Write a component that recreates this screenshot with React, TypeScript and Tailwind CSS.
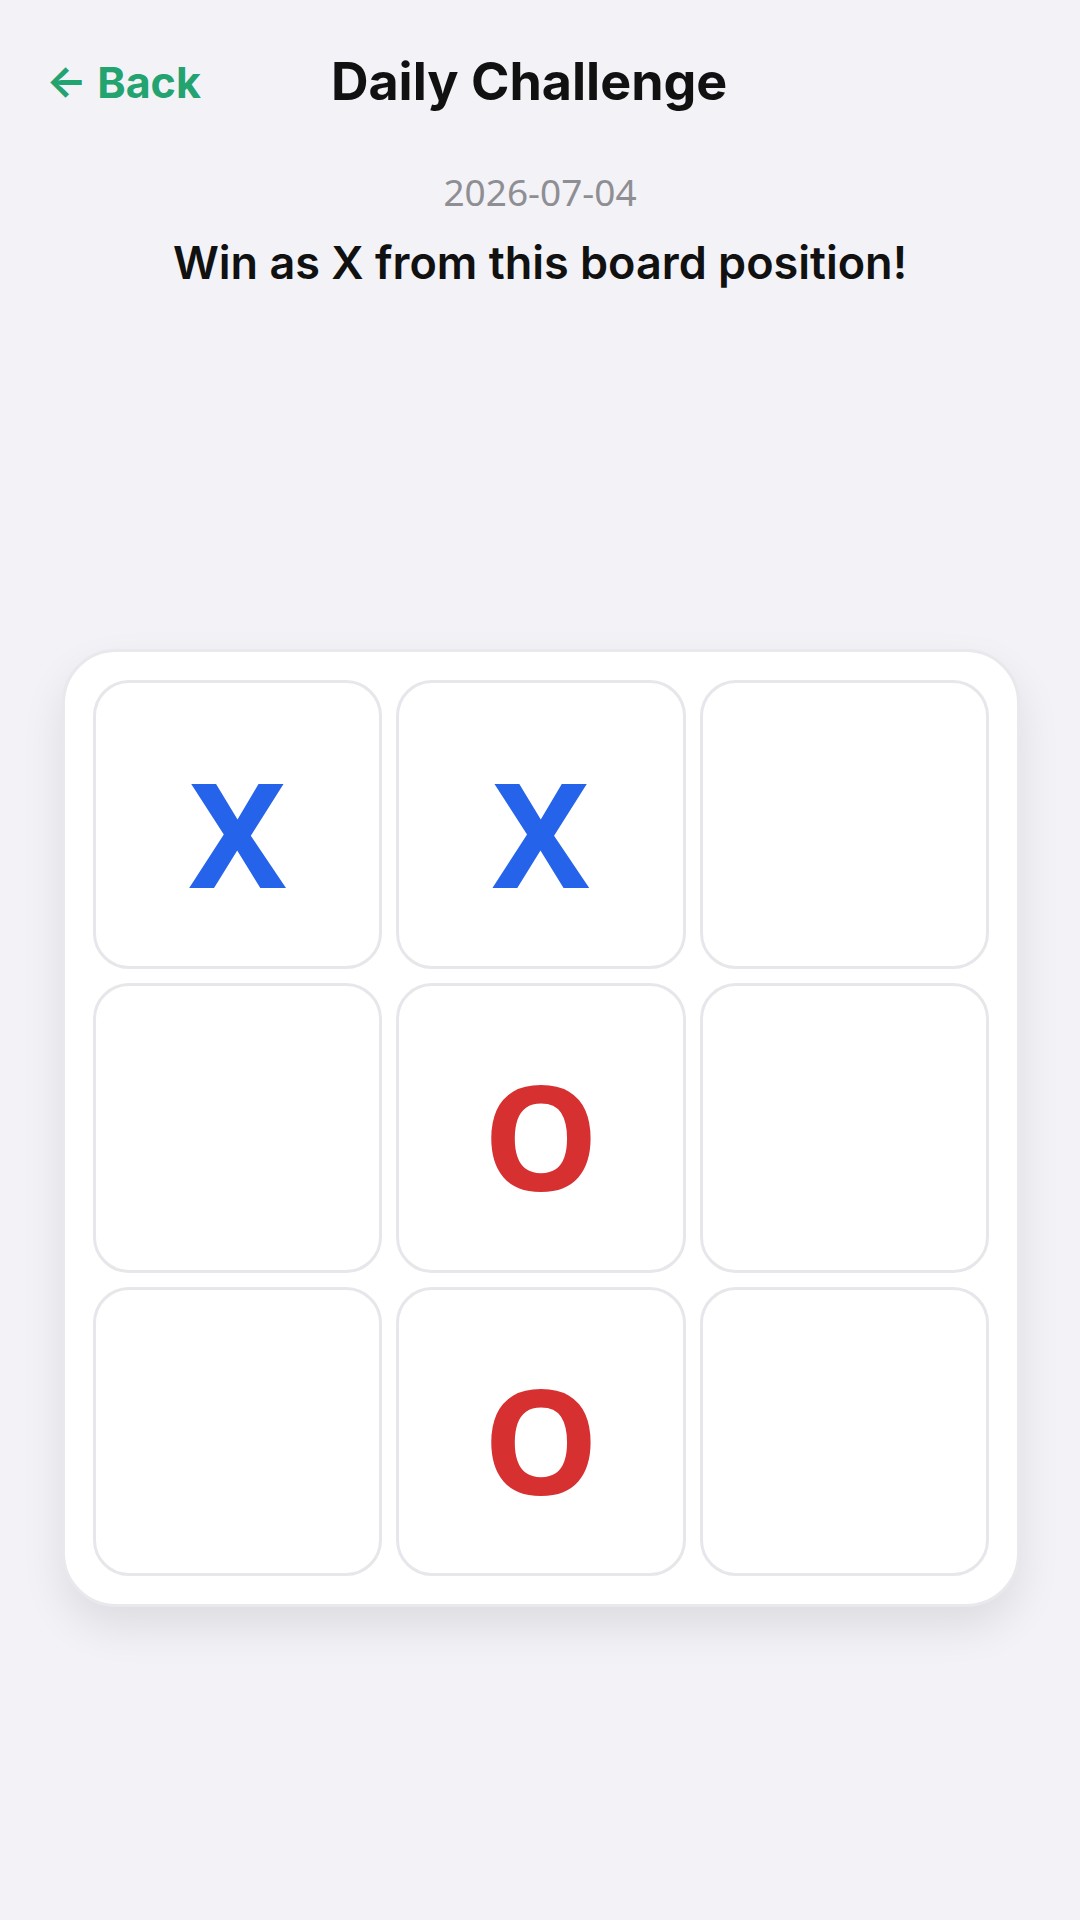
import React from "react";

const board: (string | null)[] = ["X", "X", null, null, "O", null, null, "O", null];

export default function App() {
  return (
    <div className="min-h-[1920px] w-[1080px] bg-[#f2f2f7]">
      <div className="flex items-center pt-[56px] pl-[46px]">
        <span
          className="text-[43px] leading-none font-bold text-[#22a36f]"
          style={{ fontFamily: "Inter, 'Noto Sans', sans-serif" }}
        >
          ← Back
        </span>
        <span
          className="ml-[130px] text-[52px] leading-none font-bold text-[#111111]"
          style={{ fontFamily: "Inter, 'Noto Sans', sans-serif" }}
        >
          Daily Challenge
        </span>
      </div>
      <div
        className="mt-[65px] text-center text-[37px] leading-none text-[#8e8e93]"
        style={{ fontFamily: "'Noto Sans', sans-serif" }}
      >
        2026-07-04
      </div>
      <div
        className="mt-[30px] text-center text-[45px] leading-none font-semibold text-[#111111]"
        style={{ fontFamily: "Inter, 'Noto Sans', sans-serif" }}
      >
        Win as X from this board position!
      </div>
      <div className="mt-[364px] ml-[62px] w-[958px] h-[958px] rounded-[54px] border-[3px] border-[#e8e8ed] bg-white p-[28px] shadow-[0_20px_44px_rgba(0,0,0,0.09)]">
        <div className="grid h-full grid-cols-3 grid-rows-3 gap-[14px]">
          {board.map((v, i) => (
            <div
              key={i}
              className="flex items-center justify-center rounded-[36px] border-[3px] border-[#e6e6eb] bg-white pt-[14px]"
            >
              {v && (
                <span
                  className={
                    "text-[146px] font-bold " +
                    (v === "X" ? "text-[#2563eb]" : "text-[#d63031]")
                  }
                  style={{ fontFamily: "'Noto Sans', sans-serif" }}
                >
                  {v}
                </span>
              )}
            </div>
          ))}
        </div>
      </div>
    </div>
  );
}
